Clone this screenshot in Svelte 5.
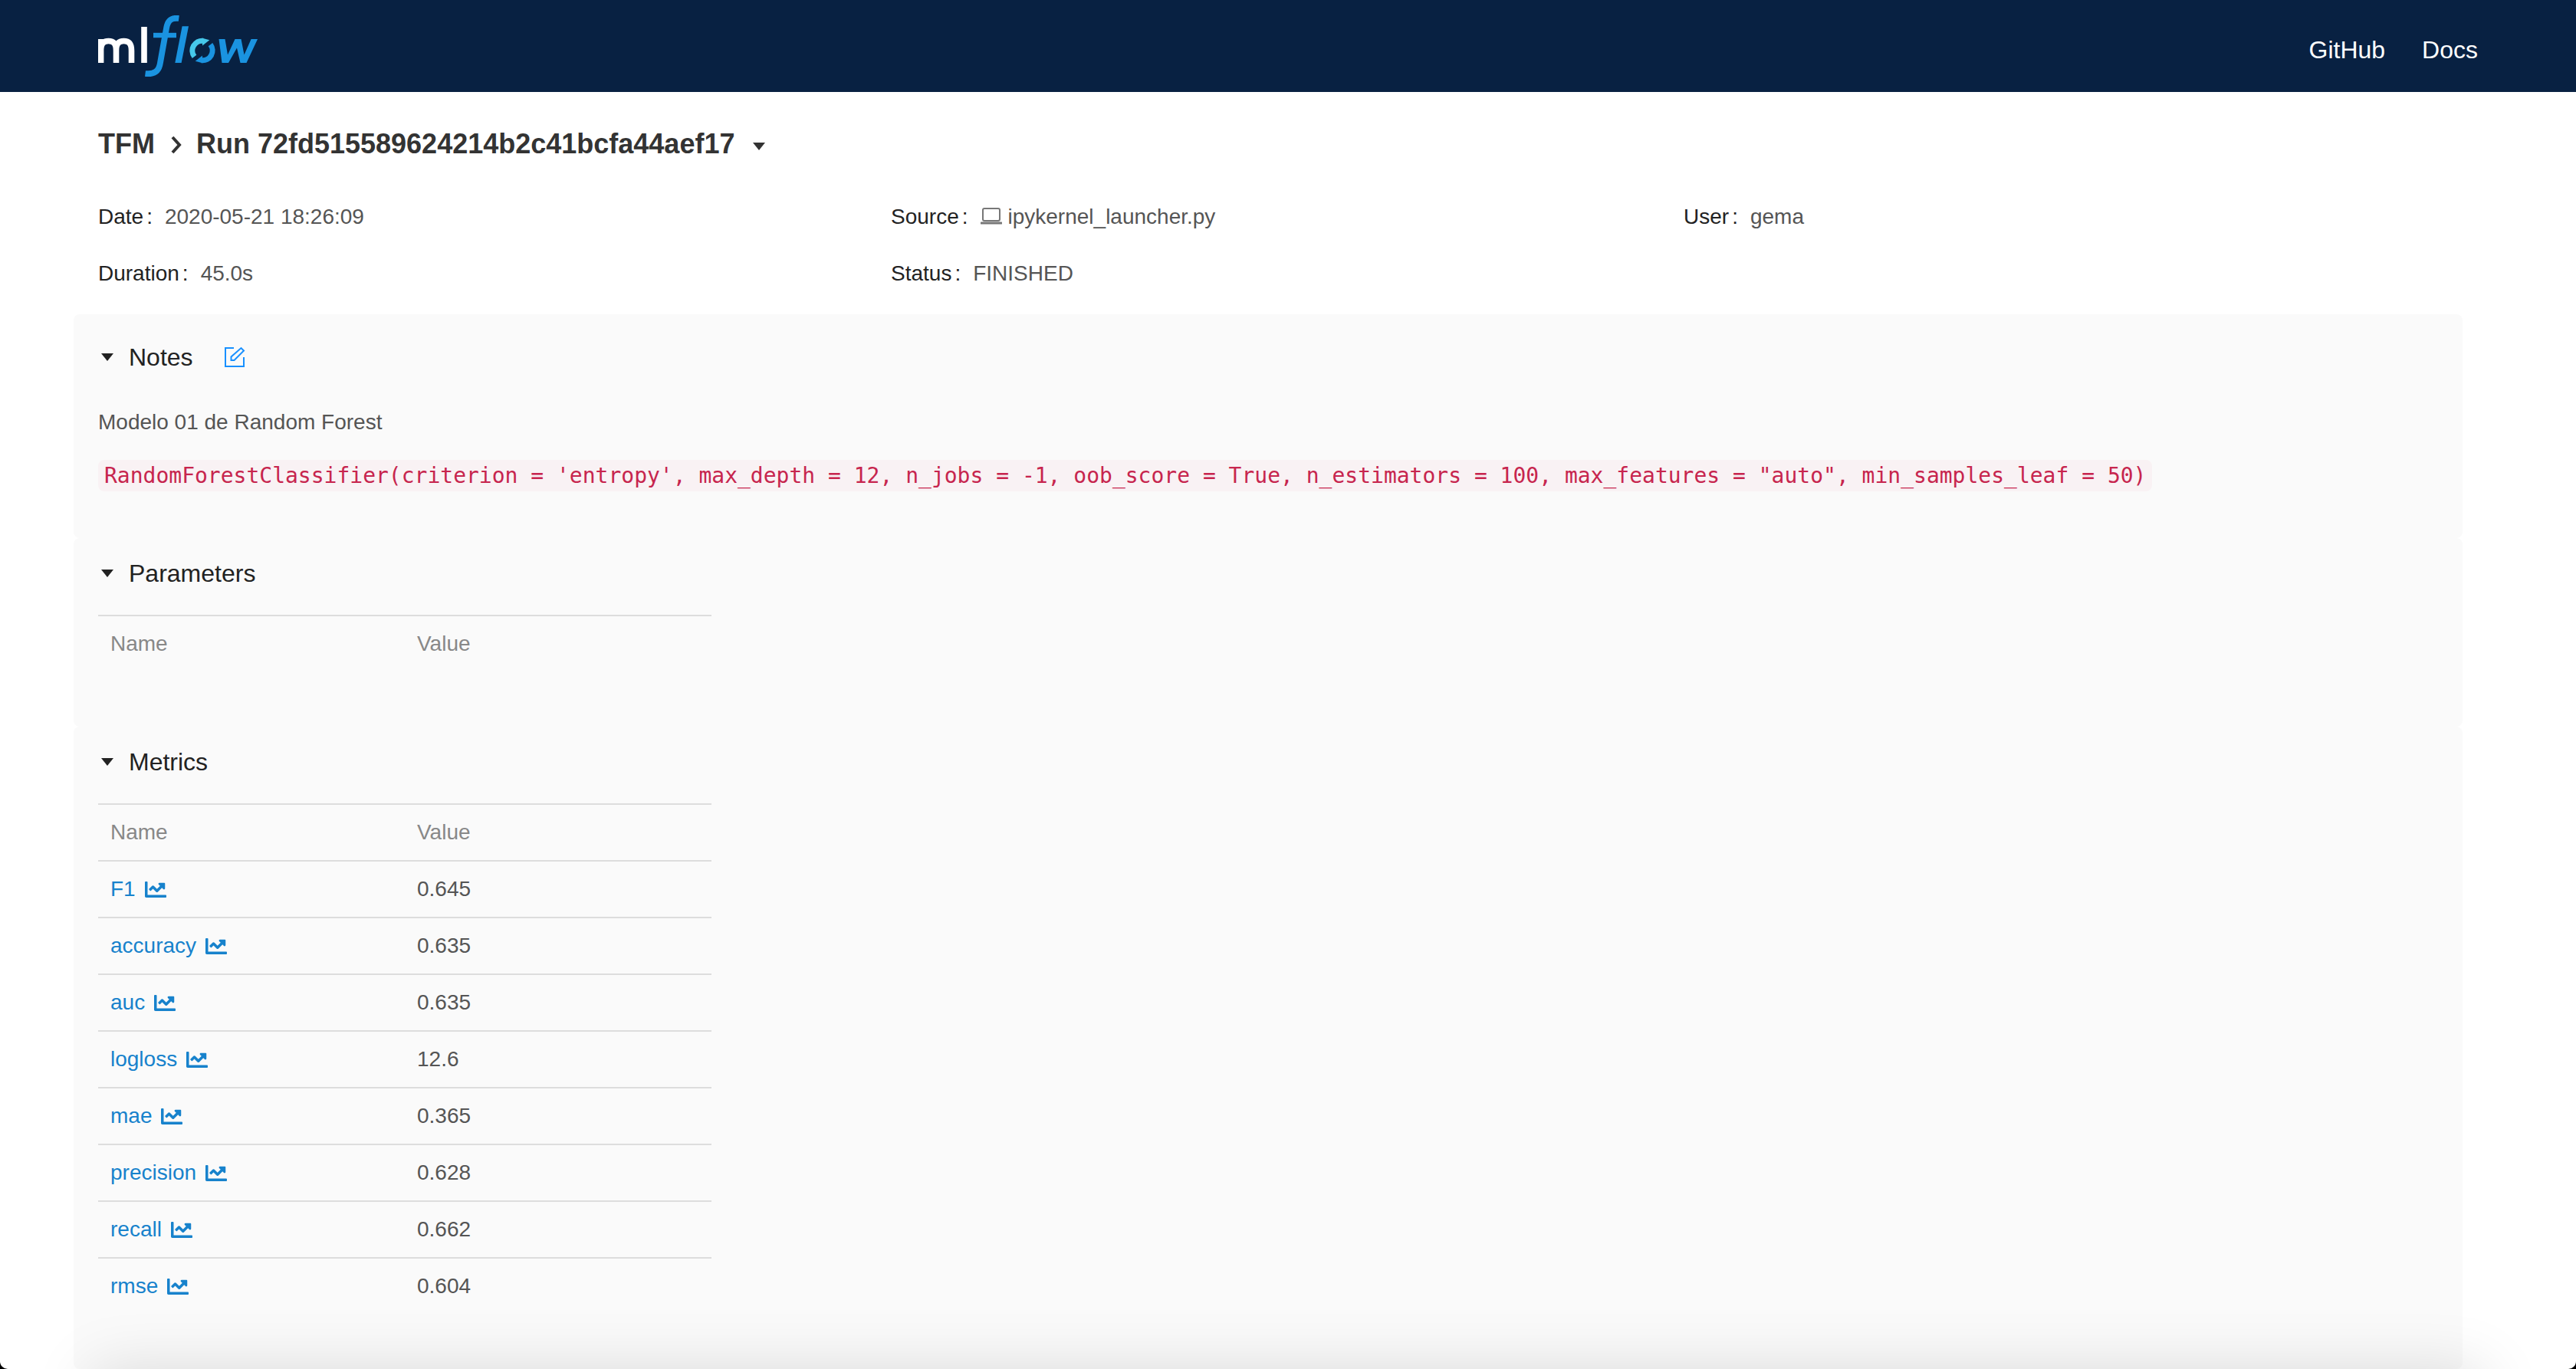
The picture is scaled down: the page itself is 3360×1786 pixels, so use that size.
<script>
  const runInfo = [
    { label: 'Date', value: '2020-05-21 18:26:09' },
    { label: 'Source', value: 'ipykernel_launcher.py', icon: true },
    { label: 'User', value: 'gema' },
    { label: 'Duration', value: '45.0s' },
    { label: 'Status', value: 'FINISHED' },
  ];

  const metrics = [
    ['F1', '0.645'],
    ['accuracy', '0.635'],
    ['auc', '0.635'],
    ['logloss', '12.6'],
    ['mae', '0.365'],
    ['precision', '0.628'],
    ['recall', '0.662'],
    ['rmse', '0.604'],
  ];

  let open = $state({ notes: true, parameters: true, metrics: true });
</script>

{#snippet sectionToggle(key, title)}
  <button class="toggle" aria-expanded={open[key]} onclick={() => (open[key] = !open[key])}>
    <svg class="caret" class:closed={!open[key]} viewBox="0 0 16 10" aria-hidden="true"><path d="M0 0H16L8 10Z" /></svg>
    <span>{title}</span>
  </button>
{/snippet}

<div class="page">
  <header>
    <a class="logo" href="#home" aria-label="mlflow">
      <svg viewBox="0 0 208 80" aria-hidden="true">
        <g fill="none" stroke="#fff" stroke-width="7.6">
          <path d="M3.600 62V31M3.600 46C3.600 37 7 33.500 13.500 33.500C20 33.500 23.500 37 23.500 46V62M23.500 46C23.500 37 27 33.500 33.500 33.500C40 33.500 43.500 37 43.500 46V62" />
          <path d="M60 62V15" />
        </g>
        <g fill="none" stroke="#1a93e0">
          <path stroke-width="7.800" d="M105.300 4C96 2.800 91 6 89.200 16L81 62C79.500 72 74 77.500 61.500 76" />
          <path stroke-width="6.400" d="M72 26H102" />
        </g>
        <path fill="#1a93e0" d="M109.600 14.300H118L108.600 62H100.300Z" />
        <path fill="none" stroke="#46c8ea" stroke-width="7" d="M125.500 53.800A12.800 12.800 0 0 1 137 33.300" />
        <path fill="#46c8ea" d="M136 29.700L145.300 32.200L136 39.500Z" />
        <path fill="none" stroke="#1a93e0" stroke-width="7" d="M146.500 38.200A12.800 12.800 0 0 1 135 58.700" />
        <path fill="#1a93e0" d="M136 62.300L126.700 59.800L136 52.500Z" />
        <path fill="#1a93e0" d="M157.500 31H165.500L169 51.500L178.500 31H186.500L190.500 51.500L199.600 31H208L193.500 62H185.500L181 42.500L170 62H161.500Z" />
      </svg>
    </a>
    <nav>
      <a href="#github">GitHub</a>
      <a href="#docs">Docs</a>
    </nav>
  </header>

  <main>
    <h1>
      <a href="#tfm">TFM</a>
      <svg class="chevron" viewBox="0 0 16 24" aria-hidden="true"><path d="M3 2L12 12L3 22" /></svg>
      <span>Run 72fd515589624214b2c41bcfa44aef17</span>
      <button class="run-menu" aria-label="Run actions">
        <svg class="caret" viewBox="0 0 16 10" aria-hidden="true"><path d="M0 0H16L8 10Z" /></svg>
      </button>
    </h1>

    <dl class="info">
      {#each runInfo as item}
        <div>
          <dt>{item.label}<span class="colon">:</span></dt>
          <dd>
            {#if item.icon}
              <svg class="laptop" viewBox="0 0 28 24" aria-hidden="true">
                <rect x="3" y="1" width="22" height="16" rx="2" />
                <path d="M1 20H27" />
              </svg>
            {/if}
            {item.value}
          </dd>
        </div>
      {/each}
    </dl>

    <section class="notes">
      <div class="heading">
        {@render sectionToggle('notes', 'Notes')}
        <button class="edit" aria-label="Edit notes">
          <svg viewBox="0 0 28 28" aria-hidden="true"><path d="M13 2H2V26H26V14M9.500 18V13.500L22.500 2L26 5.500L13.500 18Z" /></svg>
        </button>
      </div>
      {#if open.notes}
        <p>Modelo 01 de Random Forest</p>
        <p><code>RandomForestClassifier(criterion = 'entropy', max_depth = 12, n_jobs = -1, oob_score = True, n_estimators = 100, max_features = "auto", min_samples_leaf = 50)</code></p>
      {/if}
    </section>

    <section>
      <div class="heading">{@render sectionToggle('parameters', 'Parameters')}</div>
      {#if open.parameters}
        <table>
          <thead><tr><th scope="col">Name</th><th scope="col">Value</th></tr></thead>
        </table>
      {/if}
    </section>

    <section>
      <div class="heading">{@render sectionToggle('metrics', 'Metrics')}</div>
      {#if open.metrics}
        <table>
          <thead><tr><th scope="col">Name</th><th scope="col">Value</th></tr></thead>
          <tbody>
            {#each metrics as [name, value]}
              <tr>
                <td>
                  <a href={'#' + name}>{name}<svg class="chart" viewBox="0 64 512 384" aria-hidden="true"><path d="M496 384H64V80c0-8.840-7.160-16-16-16H16C7.160 64 0 71.160 0 80v336c0 17.670 14.330 32 32 32h464c8.840 0 16-7.160 16-16v-32c0-8.840-7.160-16-16-16zM464 96H345.940c-21.380 0-32.090 25.850-16.970 40.970l32.400 32.400L288 242.750l-73.370-73.370c-12.500-12.500-32.760-12.500-45.250 0l-68.690 68.690c-6.250 6.250-6.250 16.380 0 22.630l22.620 22.620c6.250 6.250 16.380 6.250 22.630 0L192 237.250l73.370 73.370c12.500 12.500 32.760 12.500 45.250 0l96-96 32.400 32.400c15.120 15.120 40.970 4.410 40.970-16.970V112c.010-8.840-7.150-16-16-16z" /></svg></a>
                </td>
                <td>{value}</td>
              </tr>
            {/each}
          </tbody>
        </table>
      {/if}
    </section>
  </main>
  <div class="bottom-shade"></div>
</div>

<style>
  :global(body) {
    background: #000;
  }
  .page {
    position: relative;
    min-height: 100vh;
    overflow: hidden;
    border-radius: 0 0 10px 10px;
    background: #fff;
    font-family: 'Liberation Sans', Arial, sans-serif;
    font-size: 28px;
    line-height: 42px;
    color: #555;
  }
  a {
    color: inherit;
    text-decoration: none;
  }
  button {
    display: flex;
    align-items: center;
    padding: 0;
    border: 0;
    background: none;
    font: inherit;
    color: inherit;
    cursor: pointer;
  }
  svg {
    display: block;
    flex: none;
  }
  header {
    display: flex;
    justify-content: space-between;
    align-items: center;
    box-sizing: border-box;
    height: 120px;
    padding: 0 128px;
    background: #082142;
  }
  .logo svg {
    width: 208px;
    height: 80px;
  }
  nav {
    display: flex;
    gap: 48px;
    padding-top: 10px;
    font-size: 32px;
    color: #fff;
  }
  main {
    padding: 0 130px 0 96px;
  }
  h1 {
    display: flex;
    align-items: center;
    margin: 0;
    padding: 44px 32px 0;
    font-size: 36px;
    line-height: 48px;
    color: #333;
  }
  .chevron {
    width: 16px;
    height: 24px;
    margin: 2px 18px 0 20px;
    fill: none;
    stroke: #333;
    stroke-width: 4;
  }
  .run-menu {
    margin-left: 24px;
    padding-top: 6px;
  }
  .caret {
    width: 16px;
    height: 10px;
    fill: currentColor;
  }
  .caret.closed {
    transform: rotate(-90deg);
  }
  .info {
    display: grid;
    grid-template-columns: repeat(3, 1fr);
    row-gap: 32px;
    margin: 0;
    padding: 50px 0 32px 32px;
  }
  .info div {
    display: flex;
    gap: 16px;
  }
  dt {
    color: #222;
  }
  .colon {
    margin-left: 4px;
  }
  dd {
    display: flex;
    align-items: center;
    gap: 8px;
    margin: 0;
  }
  .laptop {
    width: 28px;
    height: 24px;
    fill: none;
    stroke: #777;
    stroke-width: 2;
  }
  .laptop path {
    stroke-width: 3;
    stroke-linecap: round;
  }
  section {
    margin-right: 18px;
    padding: 22px 32px 72px;
    border-radius: 8px;
    background: #fafafa;
  }
  .heading {
    display: flex;
    align-items: center;
    gap: 40px;
    font-size: 32px;
    line-height: 48px;
    color: #222;
  }
  .toggle {
    gap: 20px;
    padding-left: 4px;
  }
  .edit svg {
    width: 28px;
    height: 28px;
    fill: none;
    stroke: #1890ff;
    stroke-width: 2;
  }
  p {
    margin: 0;
  }
  .notes {
    padding-top: 32px;
    padding-bottom: 60px;
  }
  .notes .heading {
    margin-bottom: 40px;
  }
  .notes p + p {
    margin-top: 28px;
  }
  code {
    padding: 4px 8px;
    border-radius: 8px;
    background: #f9f2f4;
    font-family: 'DejaVu Sans Mono', monospace;
    font-size: 28px;
    color: #c7254e;
  }
  table {
    width: 800px;
    margin-top: 30px;
    border-collapse: collapse;
    table-layout: fixed;
  }
  th,
  td {
    padding: 15px 16px;
    border-top: 2px solid #ddd;
    text-align: left;
    font-weight: 400;
  }
  th {
    color: #888;
  }
  td a {
    display: flex;
    align-items: center;
    gap: 12px;
    color: #1782cc;
  }
  .chart {
    width: 28px;
    height: 21px;
    fill: currentColor;
  }
  /* Soft shadow rising from below the window's lower edge */
  .bottom-shade {
    position: absolute;
    inset: 100% 120px auto;
    height: 200px;
    box-shadow: 0 0 80px rgba(0, 0, 0, 0.13);
    pointer-events: none;
  }
</style>
